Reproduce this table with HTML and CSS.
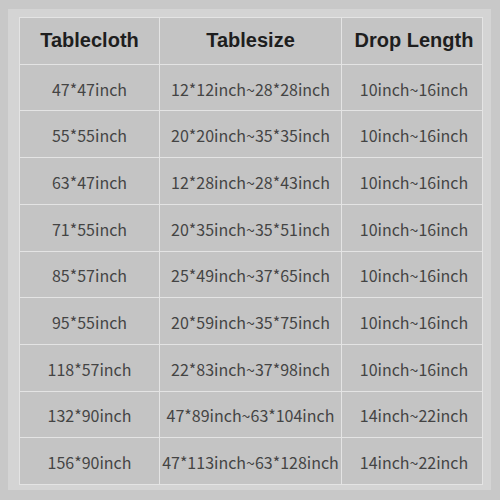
FILE: index.html
```html
<!DOCTYPE html>
<html>
<head>
<meta charset="utf-8">
<link rel="stylesheet" href="styles.css">
</head>
<body>
<div class="frame">
  <div class="grid">
    <div class="cell head">Tablecloth</div>
    <div class="cell head">Tablesize</div>
    <div class="cell head">Drop Length</div>

    <div class="cell">47*47inch</div>
    <div class="cell">12*12inch~28*28inch</div>
    <div class="cell">10inch~16inch</div>

    <div class="cell">55*55inch</div>
    <div class="cell">20*20inch~35*35inch</div>
    <div class="cell">10inch~16inch</div>

    <div class="cell">63*47inch</div>
    <div class="cell">12*28inch~28*43inch</div>
    <div class="cell">10inch~16inch</div>

    <div class="cell">71*55inch</div>
    <div class="cell">20*35inch~35*51inch</div>
    <div class="cell">10inch~16inch</div>

    <div class="cell">85*57inch</div>
    <div class="cell">25*49inch~37*65inch</div>
    <div class="cell">10inch~16inch</div>

    <div class="cell">95*55inch</div>
    <div class="cell">20*59inch~35*75inch</div>
    <div class="cell">10inch~16inch</div>

    <div class="cell">118*57inch</div>
    <div class="cell">22*83inch~37*98inch</div>
    <div class="cell">10inch~16inch</div>

    <div class="cell">132*90inch</div>
    <div class="cell">47*89inch~63*104inch</div>
    <div class="cell">14inch~22inch</div>

    <div class="cell">156*90inch</div>
    <div class="cell">47*113inch~63*128inch</div>
    <div class="cell">14inch~22inch</div>
  </div>
</div>
</body>
</html>
```

FILE: styles.css
```css
html, body {
  margin: 0;
  padding: 0;
}
body {
  background: #c8c8c8;
  width: 500px;
  height: 500px;
  padding: 9px 0 0 8px;
  box-sizing: border-box;
}
.frame {
  width: 483px;
  height: 481px;
  box-sizing: border-box;
  background: #d4d4d4;
  padding: 8px 9px 5px 11px;
}
.grid {
  width: 464px;
  height: 468px;
  box-sizing: border-box;
  padding: 1px;
  background: #e4e4e4;
  display: grid;
  grid-template-columns: 139px 181px 140px;
  grid-template-rows: repeat(10, 1fr);
  gap: 1px;
}
.cell {
  background: #c4c4c4;
  display: flex;
  align-items: center;
  justify-content: center;
  font-family: "Noto Sans CJK SC", "Noto Sans", sans-serif;
  font-size: 16px;
  color: #444444;
  white-space: nowrap;
  padding-top: 2px;
  box-sizing: border-box;
}
.cell.head {
  font-family: "Liberation Sans", Arial, sans-serif;
  font-weight: bold;
  font-size: 20px;
  color: #1e1e1e;
  padding-top: 0;
}
.cell.head:last-child,
.cell:nth-child(3n) {
  padding-left: 4px;
}
```
